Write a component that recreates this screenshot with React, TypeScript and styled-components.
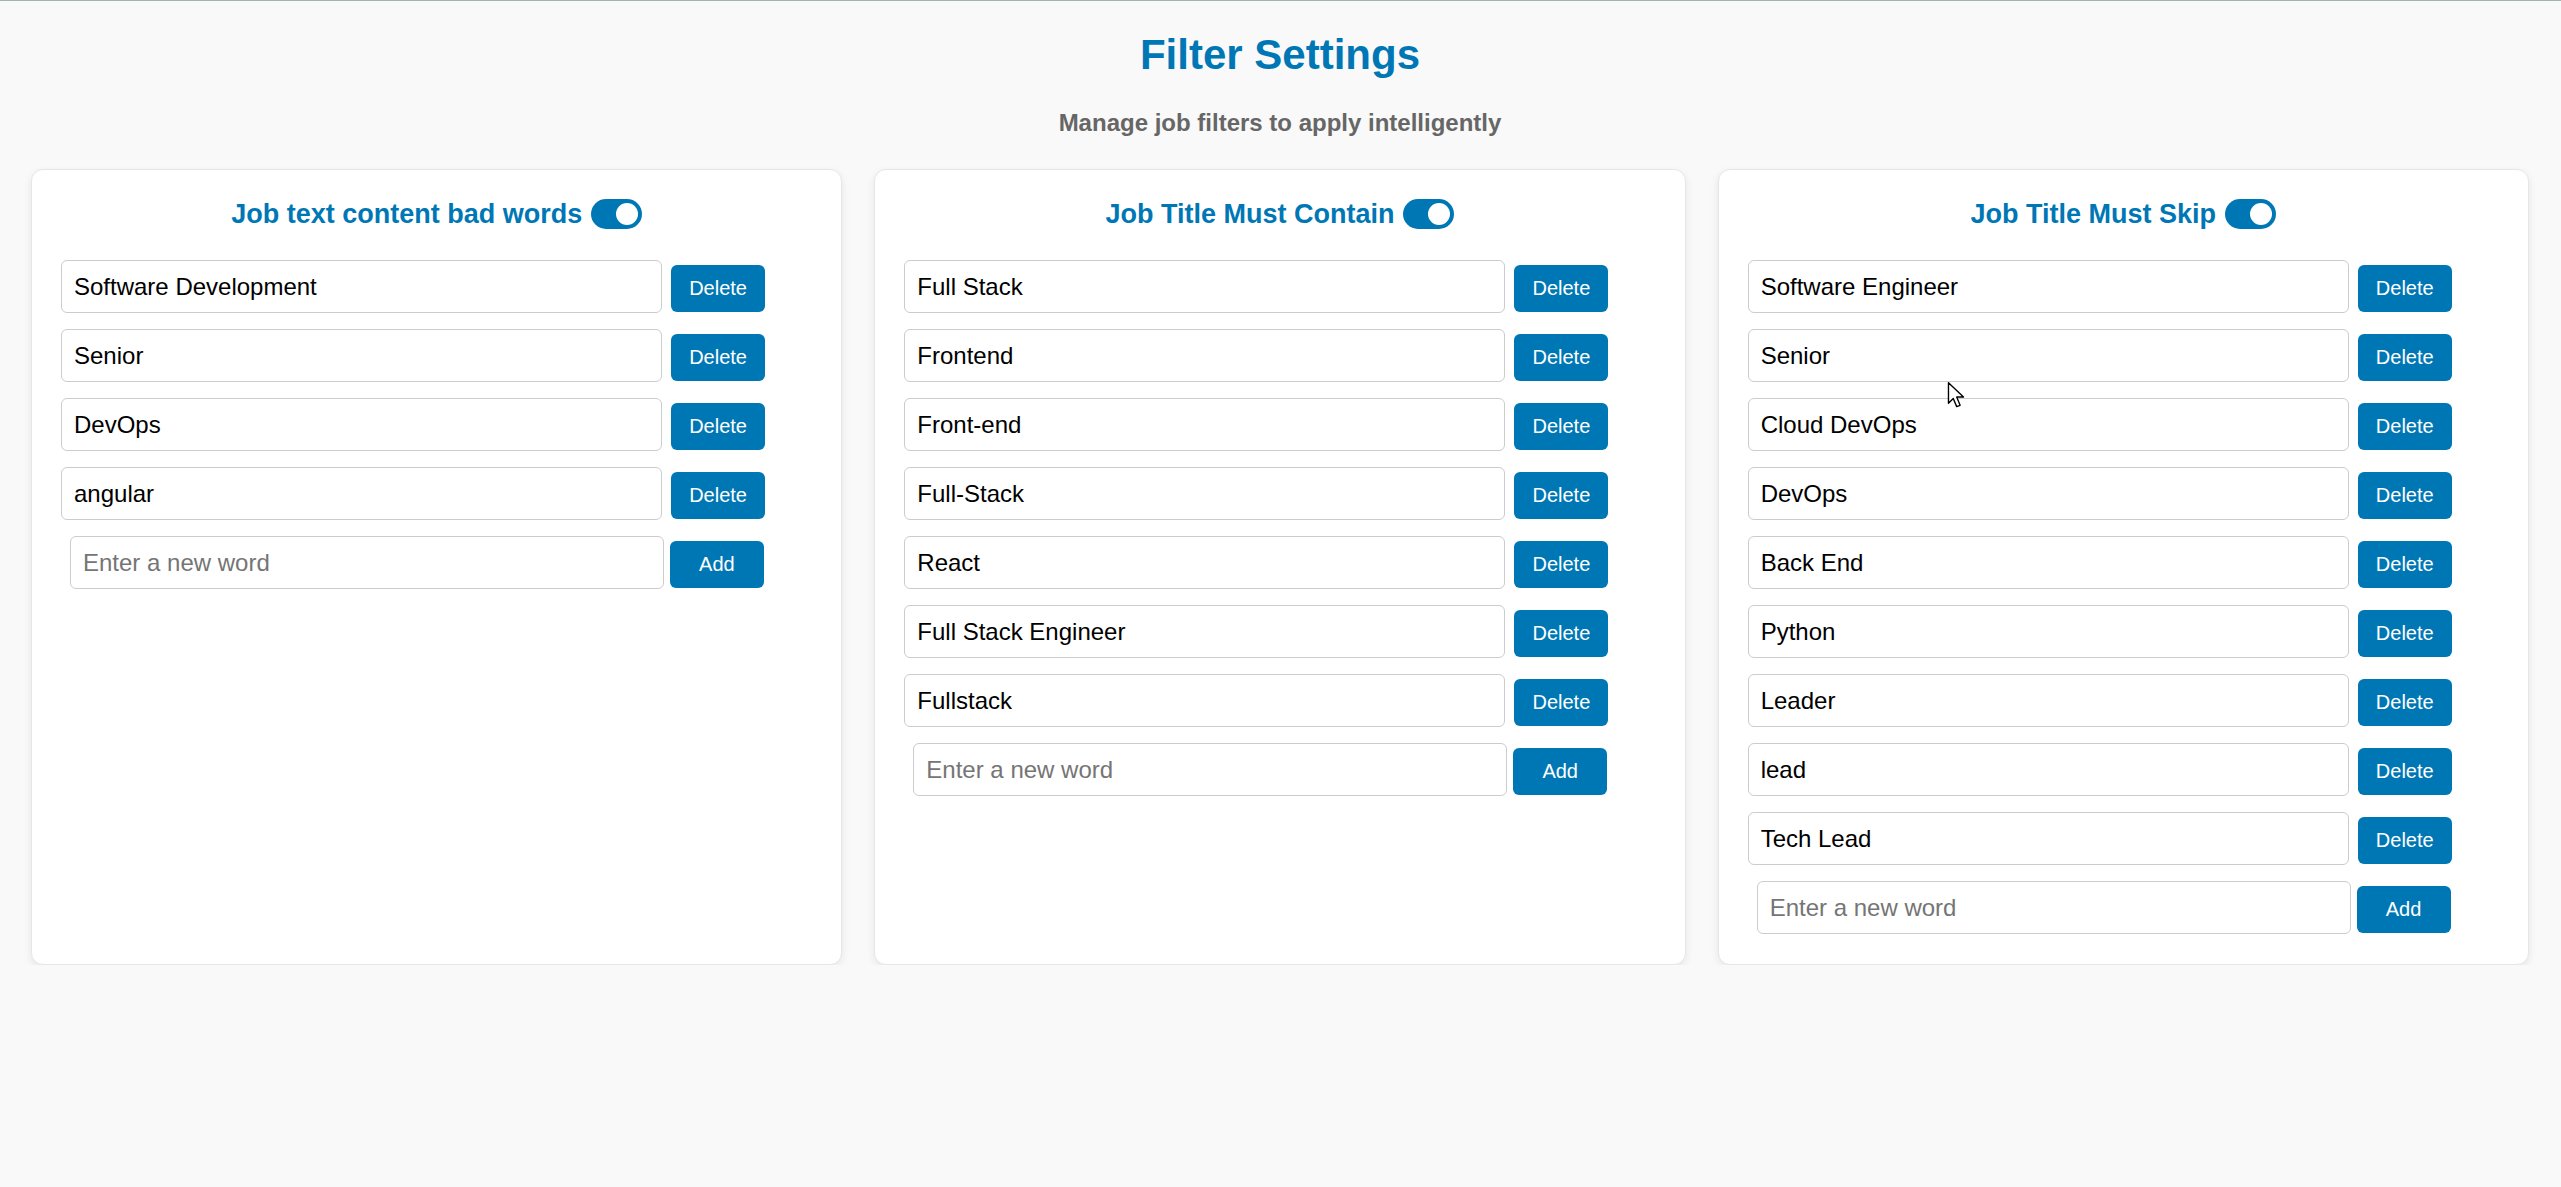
import React, { useState } from "react";
import styled, { createGlobalStyle } from "styled-components";

const GlobalStyle = createGlobalStyle`
  html, body {
    margin: 0;
    padding: 0;
    background: #f9f9f9;
    font-family: "Liberation Sans", Arial, sans-serif;
    overflow: hidden;
  }
  * { box-sizing: border-box; }
`;

const Page = styled.div`
  position: relative;
  border-top: 1px solid #9fb4ae;
  padding: 0 32px 0 31px;
  background: #f9f9f9;
`;

const Heading = styled.h1`
  margin: 30px 0 0;
  font-size: 42px;
  line-height: 48px;
  font-weight: 700;
  color: #0077b5;
  text-align: center;
`;

const Subtitle = styled.p`
  margin: 30px 0 32px;
  font-size: 24px;
  line-height: 28px;
  font-weight: 700;
  color: #666666;
  text-align: center;
`;

const Grid = styled.div`
  display: grid;
  grid-template-columns: repeat(3, 1fr);
  gap: 32px;
  align-items: stretch;
`;

const Card = styled.section`
  background: #ffffff;
  border-radius: 12px;
  border: 1px solid #e6e6e6;
  box-shadow: 0 3px 8px rgba(0, 0, 0, 0.08);
  padding: 29px 29px 30px;
`;

const CardHeader = styled.div`
  display: flex;
  align-items: center;
  justify-content: center;
  gap: 9px;
  height: 30px;
  margin-bottom: 31px;
`;

const CardTitle = styled.h3`
  margin: 0;
  font-size: 27px;
  line-height: 31px;
  font-weight: 700;
  color: #0077b5;
`;

const Toggle = styled.button<{ $on: boolean }>`
  position: relative;
  width: 51px;
  height: 30px;
  border: none;
  padding: 0;
  border-radius: 15px;
  background: ${(p) => (p.$on ? "#0077b5" : "#cccccc")};
  cursor: pointer;
  flex-shrink: 0;
  &::after {
    content: "";
    position: absolute;
    top: 4px;
    left: ${(p) => (p.$on ? "25px" : "4px")};
    width: 22px;
    height: 22px;
    border-radius: 50%;
    background: #ffffff;
  }
`;

const Row = styled.div<{ $indent?: boolean }>`
  display: flex;
  align-items: baseline;
  gap: ${(p) => (p.$indent ? "6px" : "9px")};
  padding-left: ${(p) => (p.$indent ? "9px" : "0")};
  margin-bottom: 16px;
  &:last-child {
    margin-bottom: 0;
  }
`;

const WordInput = styled.input`
  width: 80%;
  height: 53px;
  padding: 0 12px;
  border: 1.5px solid #cccccc;
  border-radius: 6px;
  font-family: "Liberation Sans", Arial, sans-serif;
  font-size: 24px;
  color: #000000;
  background: #ffffff;
  outline: none;
  &::placeholder {
    color: #757575;
  }
`;

const ActionButton = styled.button`
  width: 94px;
  height: 47px;
  padding: 0;
  border: none;
  border-radius: 6px;
  background: #0077b5;
  color: #ffffff;
  font-family: "Liberation Sans", Arial, sans-serif;
  font-size: 20px;
  cursor: pointer;
  flex-shrink: 0;
`;

const Cursor = styled.svg`
  position: absolute;
  left: 1947px;
  top: 381px;
  width: 18px;
  height: 26px;
  pointer-events: none;
`;

type Filter = { title: string; words: string[] };

const filters: Filter[] = [
  {
    title: "Job text content bad words",
    words: ["Software Development", "Senior", "DevOps", "angular"],
  },
  {
    title: "Job Title Must Contain",
    words: [
      "Full Stack",
      "Frontend",
      "Front-end",
      "Full-Stack",
      "React",
      "Full Stack Engineer",
      "Fullstack",
    ],
  },
  {
    title: "Job Title Must Skip",
    words: [
      "Software Engineer",
      "Senior",
      "Cloud DevOps",
      "DevOps",
      "Back End",
      "Python",
      "Leader",
      "lead",
      "Tech Lead",
    ],
  },
];

function FilterCard({ filter }: { filter: Filter }) {
  const [on, setOn] = useState(true);
  return (
    <Card>
      <CardHeader>
        <CardTitle>{filter.title}</CardTitle>
        <Toggle $on={on} onClick={() => setOn(!on)} aria-label="toggle" />
      </CardHeader>
      {filter.words.map((w, i) => (
        <Row key={i}>
          <WordInput defaultValue={w} />
          <ActionButton>Delete</ActionButton>
        </Row>
      ))}
      <Row $indent>
        <WordInput placeholder="Enter a new word" />
        <ActionButton>Add</ActionButton>
      </Row>
    </Card>
  );
}

export default function App() {
  return (
    <>
      <GlobalStyle />
      <Page>
        <Heading>Filter Settings</Heading>
        <Subtitle>Manage job filters to apply intelligently</Subtitle>
        <Grid>
          {filters.map((f) => (
            <FilterCard key={f.title} filter={f} />
          ))}
        </Grid>
        <Cursor viewBox="0 0 12 19">
          <path
            d="M0.5 0.5 L0.5 15.5 L4 12 L6.5 18 L9 17 L6.5 11 L11.5 11 Z"
            fill="#ffffff"
            stroke="#000000"
            strokeWidth="1"
            strokeLinejoin="round"
          />
        </Cursor>
      </Page>
    </>
  );
}
